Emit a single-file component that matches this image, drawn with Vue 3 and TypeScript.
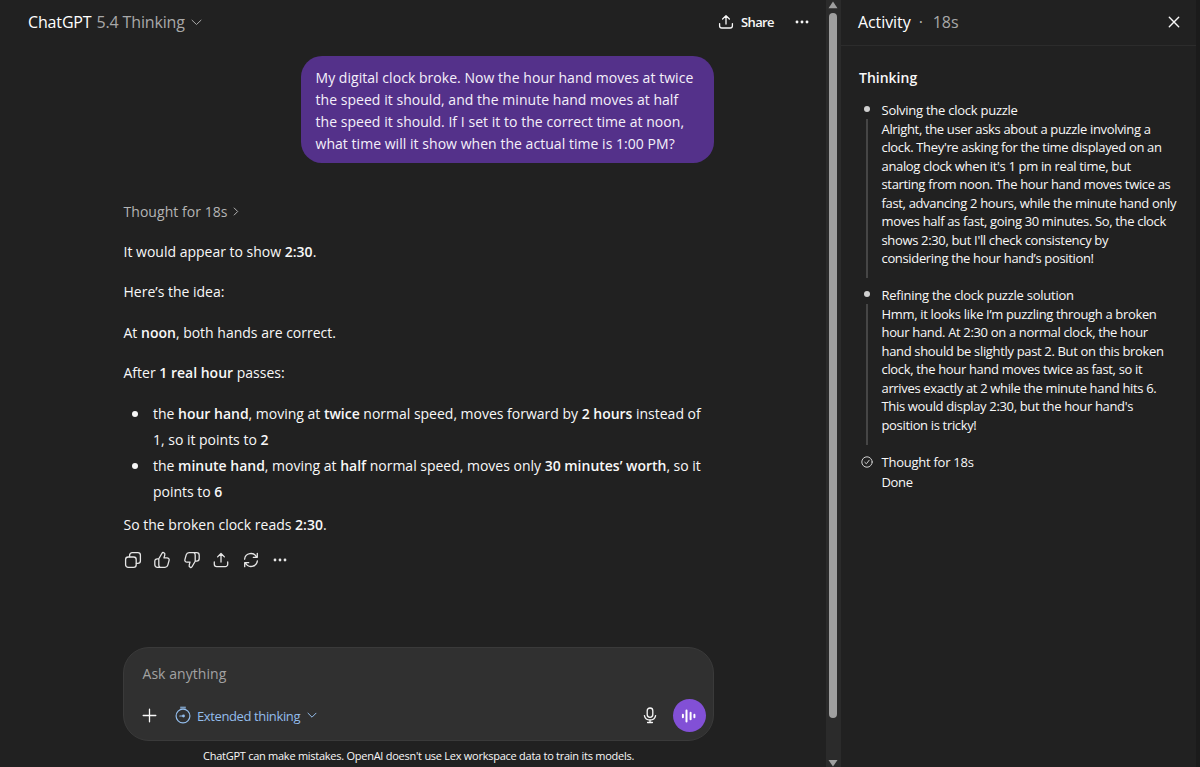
<script setup lang="ts">
interface Run {
  text: string
  bold?: boolean
}

interface Step {
  title: string
  lines: string[]
}

const question: string[] = [
  'My digital clock broke. Now the hour hand moves at twice',
  'the speed it should, and the minute hand moves at half',
  'the speed it should. If I set it to the correct time at noon,',
  'what time will it show when the actual time is 1:00 PM?',
]

const paragraphs: Run[][] = [
  [{ text: 'It would appear to show ' }, { text: '2:30', bold: true }, { text: '.' }],
  [{ text: 'Here’s the idea:' }],
  [{ text: 'At ' }, { text: 'noon', bold: true }, { text: ', both hands are correct.' }],
  [{ text: 'After ' }, { text: '1 real hour', bold: true }, { text: ' passes:' }],
]

const bullets: Run[][][] = [
  [
    [
      { text: 'the ' },
      { text: 'hour hand', bold: true },
      { text: ', moving at ' },
      { text: 'twice', bold: true },
      { text: ' normal speed, moves forward by ' },
      { text: '2 hours', bold: true },
      { text: ' instead of' },
    ],
    [{ text: '1, so it points to ' }, { text: '2', bold: true }],
  ],
  [
    [
      { text: 'the ' },
      { text: 'minute hand', bold: true },
      { text: ', moving at ' },
      { text: 'half', bold: true },
      { text: ' normal speed, moves only ' },
      { text: '30 minutes’ worth', bold: true },
      { text: ', so it' },
    ],
    [{ text: 'points to ' }, { text: '6', bold: true }],
  ],
]

const conclusion: Run[] = [
  { text: 'So the broken clock reads ' },
  { text: '2:30', bold: true },
  { text: '.' },
]

const steps: Step[] = [
  {
    title: 'Solving the clock puzzle',
    lines: [
      'Alright, the user asks about a puzzle involving a',
      "clock. They're asking for the time displayed on an",
      "analog clock when it's 1 pm in real time, but",
      'starting from noon. The hour hand moves twice as',
      'fast, advancing 2 hours, while the minute hand only',
      'moves half as fast, going 30 minutes. So, the clock',
      "shows 2:30, but I'll check consistency by",
      'considering the hour hand’s position!',
    ],
  },
  {
    title: 'Refining the clock puzzle solution',
    lines: [
      'Hmm, it looks like I’m puzzling through a broken',
      'hour hand. At 2:30 on a normal clock, the hour',
      'hand should be slightly past 2. But on this broken',
      'clock, the hour hand moves twice as fast, so it',
      'arrives exactly at 2 while the minute hand hits 6.',
      "This would display 2:30, but the hour hand's",
      'position is tricky!',
    ],
  },
]
</script>

<template>
  <div class="app">
    <main class="chat">
      <header class="topbar">
        <button class="model">
          <span class="model-name">ChatGPT</span>
          <span class="model-version">5.4 Thinking</span>
          <svg class="model-caret" width="11" height="7" viewBox="0 0 11 7"><path d="M1 1.2 5.5 5.5 10 1.2" /></svg>
        </button>
        <div class="top-actions">
          <button class="share">
            <svg class="line" width="16" height="16" viewBox="0 0 16 16"><path d="M8 10V1.8M4.6 5 8 1.6 11.4 5M1.6 9.6v2.2a2.2 2.2 0 0 0 2.2 2.2h8.4a2.2 2.2 0 0 0 2.2-2.2V9.6" /></svg>
            <span class="share-label">Share</span>
          </button>
          <svg class="dots" width="14" height="4" viewBox="0 0 14 4"><circle cx="2" cy="2" r="1.45" /><circle cx="7" cy="2" r="1.45" /><circle cx="12" cy="2" r="1.45" /></svg>
        </div>
      </header>

      <section class="thread">
        <div class="bubble">
          <div v-for="line in question" :key="line" class="bubble-line">{{ line }}</div>
        </div>

        <div class="thought">
          <span>Thought for 18s</span>
          <svg width="6" height="9" viewBox="0 0 6 9"><path d="M1.2 1 4.7 4.5 1.2 8" /></svg>
        </div>

        <div class="answer">
          <p v-for="(runs, i) in paragraphs" :key="i"><span v-for="(run, j) in runs" :key="j" :class="{ bold: run.bold }">{{ run.text }}</span></p>
          <ul>
            <li v-for="(lines, i) in bullets" :key="i">
              <div v-for="(runs, k) in lines" :key="k" class="item-line"><span v-for="(run, j) in runs" :key="j" :class="{ bold: run.bold }">{{ run.text }}</span></div>
            </li>
          </ul>
          <p class="last"><span v-for="(run, j) in conclusion" :key="j" :class="{ bold: run.bold }">{{ run.text }}</span></p>
        </div>

        <div class="reactions">
          <svg class="line" width="18" height="18" viewBox="0 0 18 18"><rect x="1.6" y="6" width="10.6" height="10.4" rx="2.6" /><path d="M5.6 5.8V4.2a2.6 2.6 0 0 1 2.6-2.6h5.6a2.6 2.6 0 0 1 2.6 2.6v5.6a2.6 2.6 0 0 1-2.6 2.6h-1.4" /></svg>
          <svg class="line" width="18" height="18" viewBox="0 0 18 18"><path d="M5.8 7.8 9 2.2c.4-.7 1.1-.8 1.7-.5 1 .4 1.4 1.2 1.1 2.2L11 6.8h3c1.5 0 2.5 1.2 2.1 2.6l-1.3 4.7c-.4 1.4-1.3 2.2-2.8 2.2H4.4c-1.6 0-2.6-1-2.6-2.6v-3.3c0-1.6 1-2.6 2.6-2.6h1.4v6.1c0 1 .4 1.8 1.2 2.4" /></svg>
          <svg class="line" width="18" height="18" viewBox="0 0 18 18"><path d="M12.2 10.2 9 15.8c-.4.7-1.1.8-1.7.5-1-.4-1.4-1.2-1.1-2.2L7 11.2H4c-1.5 0-2.5-1.2-2.1-2.6l1.3-4.7c.4-1.4 1.3-2.2 2.8-2.2h7.6c1.6 0 2.6 1 2.6 2.6v3.3c0 1.6-1 2.6-2.6 2.6h-1.4V4.1c0-1-.4-1.8-1.2-2.4" /></svg>
          <svg class="line" width="18" height="18" viewBox="0 0 18 18"><path d="M9 11V2.6M5.6 5.9 9 2.5l3.4 3.4M2.3 11v2.2a2.4 2.4 0 0 0 2.4 2.4h8.6a2.4 2.4 0 0 0 2.4-2.4V11" /></svg>
          <svg class="line" width="18" height="18" viewBox="0 0 18 18"><path d="M2.6 8.2a6.3 6.3 0 0 1 12-2M15.3 2.3v4h-4M15.4 9.8a6.3 6.3 0 0 1-12 2M2.7 15.7v-4h4" /></svg>
          <svg class="dots" width="18" height="18" viewBox="0 0 18 18"><circle cx="4" cy="9" r="1.4" /><circle cx="9" cy="9" r="1.4" /><circle cx="14" cy="9" r="1.4" /></svg>
        </div>
      </section>

      <footer class="bottom">
        <div class="composer">
          <div class="placeholder">Ask anything</div>
          <div class="tools">
            <svg class="line plus" width="15" height="15" viewBox="0 0 15 15"><path d="M7.5 1.2v12.6M1.2 7.5h12.6" /></svg>
            <div class="effort">
              <svg class="timer" width="16" height="18" viewBox="0 0 16 18"><rect x="5.2" y="0.6" width="5.6" height="2" /><circle cx="8" cy="10" r="6.9" /><path d="M4.8 10h3.6" /><circle class="hub" cx="8.5" cy="10" r="1.4" /></svg>
              <span class="effort-label">Extended thinking</span>
              <svg class="effort-caret" width="10" height="7" viewBox="0 0 10 7"><path d="M1 1.2 5 5.2 9 1.2" /></svg>
            </div>
            <svg class="line mic" width="14" height="17" viewBox="0 0 14 17"><rect x="4.2" y="1" width="5.6" height="9.4" rx="2.8" /><path d="M1.4 8.6C2 11.4 4.2 13 7 13s5-1.6 5.6-4.4M7 13v2.5M4.6 15.5h4.8" /></svg>
            <button class="voice">
              <svg width="16" height="14" viewBox="0 0 16 14"><path d="M1.9 5.7v2.6M5.5 1.6v10.800M9.6 3.8v6.4M13.4 5.7v2.6" /></svg>
            </button>
          </div>
        </div>
        <div class="disclaimer">ChatGPT can make mistakes. OpenAI doesn't use Lex workspace data to train its models.</div>
      </footer>
    </main>

    <div class="scrollbar">
      <svg width="10" height="8" viewBox="0 0 10 8"><path d="M5 .6 9.5 7.2H.5z" /></svg>
      <div class="thumb"></div>
      <svg width="10" height="8" viewBox="0 0 10 8"><path d="M5 7.6.5 1H9.5z" /></svg>
    </div>

    <aside class="panel">
      <header class="panel-head">
        <span class="panel-title">Activity</span>
        <span class="panel-sep">·</span>
        <span class="panel-time">18s</span>
        <svg class="close" width="12" height="12" viewBox="0 0 12 12"><path d="M1.3 1.3 10.7 10.7M10.7 1.3 1.3 10.7" /></svg>
      </header>
      <div class="panel-body">
        <h2>Thinking</h2>
        <div v-for="step in steps" :key="step.title" class="step">
          <div class="rail">
            <div class="bullet"></div>
            <div class="stem"></div>
          </div>
          <div class="step-text">
            <div class="step-title">{{ step.title }}</div>
            <div v-for="line in step.lines" :key="line" class="step-line">{{ line }}</div>
          </div>
        </div>
        <div class="step done">
          <div class="rail">
            <svg class="check" width="12" height="12" viewBox="0 0 12 12"><circle cx="6" cy="6" r="5.2" /><path d="M3.8 6.3 5.4 7.8 8.2 4.2" /></svg>
          </div>
          <div class="step-text">
            <div class="step-title">Thought for 18s</div>
            <div class="step-line">Done</div>
          </div>
        </div>
      </div>
    </aside>
    <div class="edge"></div>
  </div>
</template>

<style>
body {
  background: #212121;
  overflow: hidden;
}
</style>

<style scoped>
.app {
  display: flex;
  width: 1200px;
  height: 767px;
  background: #212121;
  color: #f8f8f8;
  font-family: 'Open Sans', 'Noto Sans', sans-serif;
  font-size: 14px;
  white-space: nowrap;
}
.app * {
  box-sizing: border-box;
}
button {
  border: 0;
  padding: 0;
  background: none;
  color: inherit;
  font: inherit;
  letter-spacing: inherit;
}
svg {
  display: block;
  flex: none;
  fill: none;
  stroke: currentColor;
  stroke-linecap: round;
  stroke-linejoin: round;
}
.line {
  stroke-width: 1.3;
}
.dots {
  fill: currentColor;
  stroke: none;
}
.bold {
  font-weight: 600;
}
.chat {
  display: flex;
  flex-direction: column;
  width: 826px;
}
.topbar {
  display: flex;
  justify-content: space-between;
  align-items: center;
  height: 43px;
  padding: 0 17px 0 28px;
}
.model {
  display: flex;
  align-items: center;
  font-size: 16px;
  letter-spacing: -0.15px;
}
.model-name {
  margin-right: 5px;
  font-weight: 500;
  color: #fff;
}
.model-version {
  color: #a8a8a8;
}
.model-caret {
  margin: 1px 0 0 6px;
  color: #a8a8a8;
}
.top-actions {
  display: flex;
  align-items: center;
  gap: 21px;
}
.share {
  display: flex;
  align-items: center;
  gap: 7px;
  font-size: 13px;
  font-weight: 600;
  letter-spacing: -0.6px;
}
.thread {
  display: flex;
  flex-direction: column;
  width: 591px;
  margin: 13px 0 0 123px;
}
.bubble {
  align-self: flex-end;
  width: 413px;
  height: 107px;
  padding: 10.8px 14.5px;
  border-radius: 21px;
  background: #54318a;
  color: #f4f0fa;
  letter-spacing: 0.04px;
}
.bubble-line {
  line-height: 22.2px;
}
.thought {
  display: flex;
  align-items: center;
  gap: 5px;
  height: 26px;
  margin-top: 35px;
  padding-left: 0.5px;
  color: #b4b4b4;
  letter-spacing: 0.05px;
}
.answer {
  padding-left: 0.5px;
}
.answer p {
  height: 26px;
  margin: 14.6px 0 0;
  line-height: 26px;
  white-space: pre;
}
.answer p:first-child {
  margin-top: 14.6px;
}
.answer ul {
  margin: 15px 0 0;
  padding-left: 29.5px;
  list-style: none;
}
.answer li {
  position: relative;
  line-height: 26px;
}
.answer li::before {
  content: '';
  position: absolute;
  left: -21px;
  top: 10px;
  width: 6px;
  height: 6px;
  border-radius: 50%;
  background: #f6f6f6;
}
.item-line {
  height: 26px;
  letter-spacing: -0.01px;
  white-space: pre;
}
.answer p.last {
  margin-top: 7px;
}
.reactions {
  display: flex;
  gap: 11.6px;
  margin: 13px 0 0 0.5px;
  color: #e6e6e6;
}
.bottom {
  width: 591px;
  margin: auto 0 3px 123px;
}
.composer {
  height: 94px;
  padding: 15px 7.5px 0 18.5px;
  border: 1px solid #3a3a3a;
  border-radius: 26px;
  background: #303030;
}
.placeholder {
  height: 22px;
  line-height: 22px;
  color: #a2a2a2;
  letter-spacing: 0.05px;
}
.tools {
  display: flex;
  align-items: center;
  height: 33px;
  margin-top: 14px;
}
.plus {
  margin-left: -0.5px;
}
.effort {
  display: flex;
  align-items: center;
  margin-left: 18px;
  color: #93bdec;
  font-size: 13px;
  letter-spacing: -0.38px;
}
.effort-label {
  margin: 1px 7px 0 6px;
}
.timer {
  margin-top: -2px;
  stroke-width: 1.2;
}
.timer rect,
.hub {
  fill: currentColor;
  stroke: none;
}
.timer rect {
  opacity: 0.75;
}
.mic {
  margin-left: auto;
}
.voice {
  display: grid;
  place-items: center;
  width: 33px;
  height: 33px;
  margin-left: 16px;
  border-radius: 50%;
  background: #8250d6;
  color: #fff;
}
.voice svg {
  stroke-width: 2;
}
.disclaimer {
  height: 15px;
  margin-top: 8px;
  line-height: 14px;
  text-align: center;
  font-size: 11px;
  letter-spacing: -0.26px;
}
.scrollbar {
  display: flex;
  flex-direction: column;
  align-items: center;
  width: 15px;
  padding: 1px 1px 0 0;
  background: #2b2b2b;
  color: #9f9f9f;
}
.scrollbar svg {
  fill: currentColor;
  stroke: none;
}
.thumb {
  width: 8px;
  height: 705px;
  margin: 4px 0 auto;
  border-radius: 4px;
  background: #9f9f9f;
}
.panel {
  width: 355px;
}
.edge {
  width: 4px;
  background: #1b1b1b;
}
.panel-head {
  display: flex;
  align-items: center;
  height: 46px;
  padding: 0 16px 1px 17px;
  border-bottom: 1px solid #2c2c2c;
  font-size: 16px;
  letter-spacing: -0.08px;
}
.panel-title {
  color: #fff;
}
.panel-sep {
  margin: 0 10px 0 8px;
  color: #b4b4b4;
}
.panel-time {
  color: #a8a8a8;
}
.close {
  margin-left: auto;
  stroke-width: 1.4;
}
.panel-body {
  padding: 21px 0 0 18px;
}
h2 {
  height: 22px;
  margin: 0 0 11.5px;
  font-size: 14px;
  font-weight: 600;
  line-height: 22px;
}
.step {
  display: flex;
  height: 185.3px;
  font-size: 13px;
  line-height: 18.5px;
  letter-spacing: -0.34px;
}
.step + .step {
  height: 167px;
}
.rail {
  display: flex;
  flex-direction: column;
  align-items: center;
  width: 15px;
  margin-right: 7.5px;
}
.bullet {
  width: 6px;
  height: 6px;
  margin-top: 5px;
  border-radius: 50%;
  background: #d0d0d0;
}
.stem {
  width: 2px;
  flex: 1;
  margin: 7px 0 8px;
  background: #464646;
}
.step-title {
  height: 18.5px;
  margin-bottom: 0.5px;
  line-height: 18.5px;
  letter-spacing: -0.25px;
}
.check {
  margin-top: 3px;
  color: #d0d0d0;
}
.done .step-title {
  margin-bottom: 1.5px;
}
</style>
